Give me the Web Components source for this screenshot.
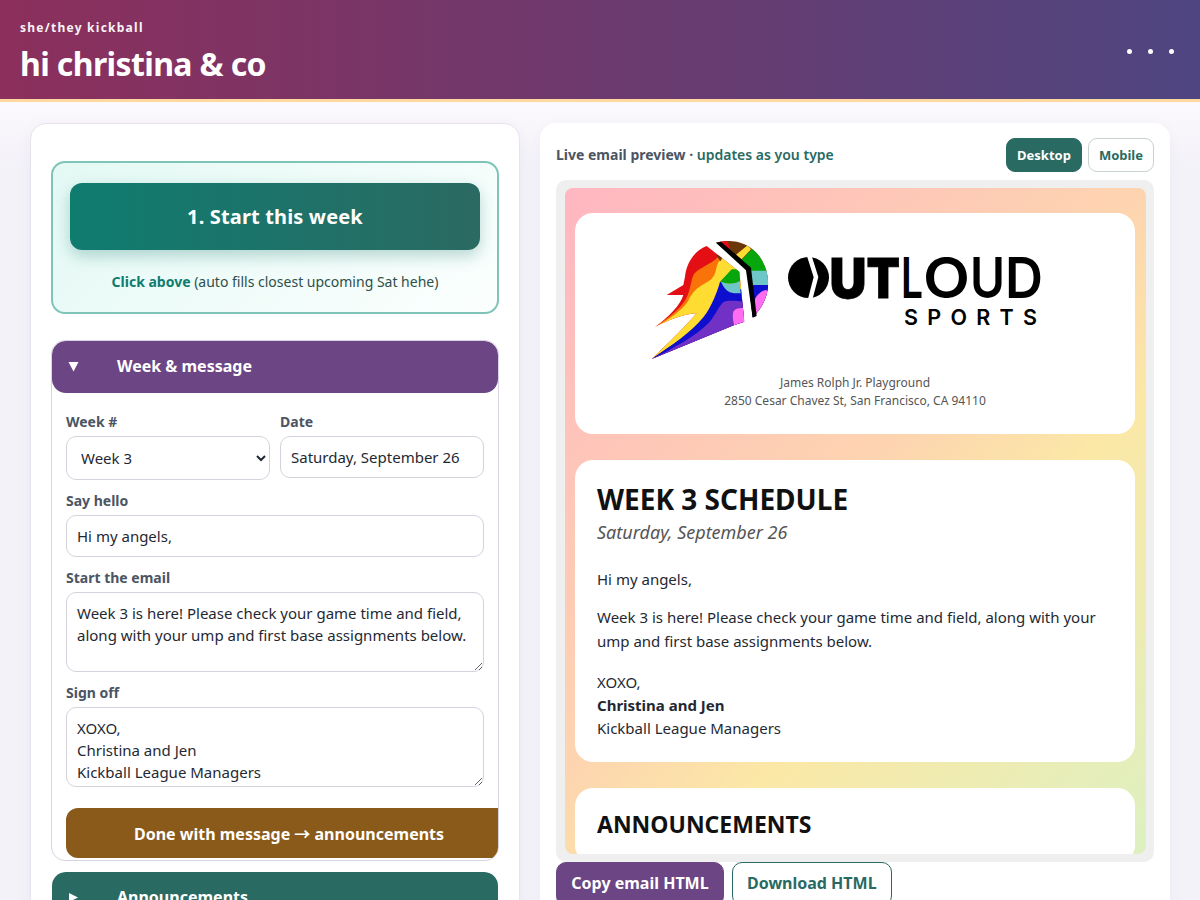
<!DOCTYPE html>
<html lang="en"><head><meta charset="utf-8"><title>hi christina &amp; co</title>
<style>
html,body{margin:0;padding:0;height:900px;overflow:hidden}
body{background:linear-gradient(180deg,#fbf9fc 100px,#f4f2f9 170px);font-family:"Noto Sans",sans-serif;color:#1f2933}
</style></head><body>
<app-shell>
  <app-header slot="header" eyebrow="she/they kickball" title="hi christina &amp; co"></app-header>
  <form-panel slot="left">
    <start-box></start-box>
    <acc-section color="#6b4584" label="Week &amp; message" open>
      <div style="display:grid;grid-template-columns:1fr 1fr;gap:10px">
        <form-field label="Week #"><select-box value="Week 3"></select-box></form-field>
        <form-field label="Date"><text-box value="Saturday, September 26"></text-box></form-field>
      </div>
      <form-field label="Say hello"><text-box value="Hi my angels,"></text-box></form-field>
      <form-field label="Start the email"><area-box value="Week 3 is here! Please check your game time and field, along with your ump and first base assignments below."></area-box></form-field>
      <form-field label="Sign off"><area-box value="XOXO,&#10;Christina and Jen&#10;Kickball League Managers"></area-box></form-field>
      <next-button>Done with message <span style="font-family:'Noto Sans CJK JP',sans-serif">→</span> announcements</next-button>
    </acc-section>
    <acc-section color="#296a62" label="Announcements"></acc-section>
  </form-panel>
  <preview-panel slot="right">
    <email-card logo>
      <outloud-logo></outloud-logo>
      <div style="text-align:center;font-size:12px;line-height:18px;color:#555">James Rolph Jr. Playground<br>2850 Cesar Chavez St, San Francisco, CA 94110</div>
    </email-card>
    <email-card>
      <div style="font-size:28px;line-height:36px;font-weight:700;color:#111;margin-top:-1px">WEEK 3 SCHEDULE</div>
      <div style="font-size:18px;line-height:28px;font-style:italic;color:#555;margin-top:1px">Saturday, September 26</div>
      <p style="margin:21px 0 0;font-size:15px;line-height:24px">Hi my angels,</p>
      <p style="margin:14px 0 0;font-size:15px;line-height:24px">Week 3 is here! Please check your game time and field, along with your ump and first base assignments below.</p>
      <p style="margin:18px 0 0;font-size:15px;line-height:23px">XOXO,<br><b>Christina and Jen</b><br>Kickball League Managers</p>
    </email-card>
    <email-card>
      <div style="font-size:23px;line-height:34px;font-weight:700;color:#111;margin-top:-3px">ANNOUNCEMENTS</div>
    </email-card>
  </preview-panel>
</app-shell>
<script>
function def(name, css, html){
  customElements.define(name, class extends HTMLElement{
    constructor(){super();const r=this.attachShadow({mode:'open'});
      const a=n=>this.getAttribute(n)||'';
      r.innerHTML='<style>'+css+'</style>'+(typeof html==='function'?html(a,this):html);}
  });
}
const esc=s=>s.replace(/&/g,'&amp;').replace(/"/g,'&quot;').replace(/</g,'&lt;');
def('app-shell',`:host{display:block}
 main{display:grid;grid-template-columns:490px 630px;gap:20px;padding:21px 30px 0}
 `,`<slot name="header"></slot><main><slot name="left"></slot><slot name="right"></slot></main>`);
def('app-header',`:host{display:flex;align-items:center;justify-content:space-between;box-sizing:border-box;height:102px;padding:0 20px;
   background:linear-gradient(90deg,#8c2f5c,#4e4580);border-bottom:3px solid #ffd9a0;color:#fff}
 .e{font-size:12px;line-height:16px;font-weight:700;letter-spacing:1.25px;opacity:.95;margin-top:4px}
 h1{margin:8px 0 0;font-size:32px;line-height:40px;font-weight:700;letter-spacing:-.62px}
 .d{display:flex;gap:16px;margin-right:6px;margin-top:4px}.d i{width:5px;height:5px;border-radius:50%;background:#fff}`,
 a=>`<div><div class="e">${esc(a('eyebrow'))}</div><h1>${esc(a('title'))}</h1></div><div class="d"><i></i><i></i><i></i></div>`);
def('form-panel',`:host{display:block;box-sizing:border-box;height:1000px;background:#fff;border:1px solid #e8e4ee;border-radius:16px;padding:37px 20px 0;box-shadow:0 4px 16px rgba(60,40,90,.05)}`,`<slot></slot>`);
def('start-box',`:host{display:block;box-sizing:border-box;height:153px;margin-bottom:26px;border:2px solid #7fc4b8;border-radius:14px;background:linear-gradient(135deg,#e4f9f4,#fbfffe);padding:20px 17px 0;text-align:center}
 button{display:block;width:100%;height:67px;border:0;border-radius:12px;background:linear-gradient(90deg,#0f7c70,#2a6a62);color:#fff;font:700 20px "Noto Sans",sans-serif;letter-spacing:.15px;box-shadow:0 6px 16px rgba(15,110,100,.28)}
 p{margin:22px 0 0;font-size:14px;line-height:20px;color:#2f4f4a}b{color:#0f7c70}`,
 `<button>1. Start this week</button><p><b>Click above</b> (auto fills closest upcoming Sat hehe)</p>`);
def('acc-section',`:host{display:block;box-sizing:border-box;margin-bottom:11px;border:1px solid #d9d2e2;border-radius:14px;overflow:hidden}
 :host(:not([open])){border:0;padding:0 1px}
 .h{display:flex;align-items:center;box-sizing:border-box;height:52px;padding:0 0 2px 15px;background:var(--c);color:#fff;font-size:16px;font-weight:700;border-radius:14px}
 .t{width:50px;display:flex}.b{padding:19px 14px 2px;display:flex;flex-direction:column;gap:11px}`,
 (a,el)=>`<style>:host{--c:${a('color')}}</style><div class="h"><span class="t"><svg width="13" height="11" viewBox="0 0 13 11"><path fill="#fff" d="${el.hasAttribute('open')?'M1.5 1H11.5L6.5 10.5Z':'M2 1V10L11 5.5Z'}"/></svg></span><span>${esc(a('label'))}</span></div>${el.hasAttribute('open')?'<div class="b"><slot></slot></div>':''}`);
def('form-field',`:host{display:block}label{display:block;font-size:14px;line-height:20px;font-weight:700;color:#4b5563;margin-bottom:4px}`,
 a=>`<label>${esc(a('label'))}</label><slot></slot>`);
const ctl=`box-sizing:border-box;width:100%;display:block;border:1px solid #d6d2dc;border-radius:10px;background:#fff;color:#1f2933;font:15px/22px "Noto Sans",sans-serif;outline:none;margin:0;`;
def('select-box',`:host{display:block}select{${ctl}height:44px;padding:0 10px}`,a=>`<select><option>${esc(a('value'))}</option></select>`);
def('text-box',`:host{display:block}input{${ctl}height:42px;padding:0 10px}`,a=>`<input type="text" value="${esc(a('value'))}">`);
def('area-box',`:host{display:block}textarea{${ctl}height:80px;padding:9px 10px 10px;resize:vertical;overflow:hidden}`,a=>`<textarea>${esc(a('value'))}</textarea>`);
def('next-button',`:host{display:block;margin-top:10px;width:446px}button{display:block;width:100%;height:50px;border:0;border-radius:12px;background:#8a5a1a;color:#fff;font:700 16px "Noto Sans",sans-serif}`,`<button><slot></slot></button>`);
def('preview-panel',`:host{display:block;box-sizing:border-box;height:1000px;background:#fff;border-radius:16px;padding:15px 16px;box-shadow:0 4px 16px rgba(60,40,90,.04)}
 .top{display:flex;align-items:center;justify-content:space-between;height:34px;font-size:14px;font-weight:700;color:#4b5563}.top span{margin-top:-2px}.top em{font-style:normal;font-weight:600;color:#296a62}
 .tabs{display:flex;gap:6px}button{box-sizing:border-box;height:34px;padding:0 10px;border-radius:9px;font:700 13px "Noto Sans",sans-serif;border:1px solid #c9d2d0;background:#fff;color:#296a62}
 button.on{background:#296a62;color:#fff;border-color:#296a62}
 .frame{box-sizing:border-box;height:682px;margin-top:8px;padding:8px 8px 8px 9px;background:#efefef;border-radius:10px}
 .mail{box-sizing:border-box;height:100%;overflow:hidden;padding:25px 11px 0 10px;border-radius:8px;background:linear-gradient(135deg,#ffb6c1 0,#fdd4b0 411px,#fbe8a6 559px,#dff0c0 863px,#c8ecd8 1100px);display:flex;flex-direction:column;gap:26px}
 .acts{display:flex;gap:8px}.acts button{height:44px;font-size:16px;padding:0 14px 2px;border-radius:10px}.acts .c{width:168px;background:#6b4584;color:#fff;border-color:#6b4584}.acts .d{border-color:#296a62}`,
 `<div class="top"><span>Live email preview · <em>updates as you type</em></span><div class="tabs"><button class="on">Desktop</button><button>Mobile</button></div></div>
 <div class="frame"><div class="mail"><slot></slot></div></div>
 <div class="acts"><button class="c">Copy email HTML</button><button class="d">Download HTML</button></div>`);
def('email-card',`:host{display:block;box-sizing:border-box;flex:none;background:#fff;border-radius:18px;padding:22px}
 :host([logo]){height:221px;padding:17px 22px 0}`,`<slot></slot>`);
def('outloud-logo',`:host{display:block;margin-bottom:9px}svg{display:block;margin:0 auto}
 text{fill:#000}`,`<svg width="430" height="135" viewBox="640 230 430 135" role="img" aria-label="Outloud Sports">
 <defs>
  <clipPath id="l"><path d="M200 48C165 62 140 95 135 140L130 165L80 195L130 195C122 225 85 262 45 291C80 272 130 252 170 250C140 285 90 335 35 387L283 285L313 275L298 125Z"/></clipPath>
  <clipPath id="r"><path d="M228 38C275 25 330 35 362 85C398 140 392 210 338 262L322 118Z"/></clipPath>
 </defs>
 <g transform="translate(640 230) scale(.3333)">
  <g clip-path="url(#l)">
   <rect width="420" height="405" fill="#e40f14"/>
   <path fill="#f87408" d="M238 76C222 100 182 110 162 132C150 155 152 190 132 216C112 244 82 266 40 294L240 200Z"/>
   <path fill="#ffdc32" d="M240 90C222 112 236 140 198 158C168 174 155 190 145 212C125 242 90 266 40 295L30 390L310 200V110L250 72Z"/>
   <path fill="#6b3608" d="M228 76L250 76L242 94Z"/>
   <path fill="#0e0ece" d="M240 155C232 185 215 230 190 262C150 310 90 350 30 390L320 290L310 180Z"/>
   <path fill="#07a60c" d="M275 118L240 155C255 162 280 165 300 155V118Z"/>
   <path fill="#6ec6c8" d="M243 155C250 170 260 185 275 188C285 190 295 190 302 190L299 153C280 165 260 162 243 155Z"/>
   <path fill="#7031c4" d="M320 217C290 212 262 210 250 217C235 230 228 255 205 280C165 320 100 355 30 390L320 290Z"/>
   <path fill="#ff6cf0" d="M320 235C300 233 285 235 280 245C276 260 280 272 283 290L320 280Z"/>
  </g>
  <g clip-path="url(#r)">
   <rect width="420" height="405" fill="#6b3608"/>
   <path fill="#e40f14" d="M228 30H262L270 56L240 50Z"/>
   <path fill="#ffdc32" d="M323 46L288 74L305 88L333 58Z"/>
   <path fill="#07a60c" d="M335 58L304 90L330 123H395V58Z"/>
   <path fill="#6ec6c8" d="M330 122H395V165H330Z"/>
   <path fill="#0e0ece" d="M330 165H395V270H330Z"/>
   <path fill="#ff6cf0" d="M345 207C352 192 365 182 378 180L395 190V270H340Z"/>
  </g>
  <path fill="#000" d="M228 38L243 35L333 113L350 258L338 263L318 121Z"/>
 </g>
 <circle cx="808.5" cy="277.5" r="20.5" fill="#000"/>
 <path fill="none" stroke="#fff" stroke-width="4.5" d="M809 255L816 277L810 300"/>
 <text y="298" font-family="Inter" font-weight="900" font-size="55" stroke="#000" stroke-width=".8"><tspan x="829.5" textLength="37" lengthAdjust="spacingAndGlyphs">U</tspan><tspan x="866.5" textLength="33.5" lengthAdjust="spacingAndGlyphs">T</tspan></text>
 <text y="298" font-family="Inter" font-weight="600" font-size="56"><tspan x="901" textLength="22" lengthAdjust="spacingAndGlyphs">L</tspan><tspan x="923" textLength="47" lengthAdjust="spacingAndGlyphs">O</tspan><tspan x="970" textLength="35" lengthAdjust="spacingAndGlyphs">U</tspan><tspan x="1005" textLength="38" lengthAdjust="spacingAndGlyphs">D</tspan></text>
 <text x="904" y="325" font-family="Inter" font-weight="600" font-size="21.5" textLength="133">SPORTS</text>
</svg>`);
</script>
</body></html>
